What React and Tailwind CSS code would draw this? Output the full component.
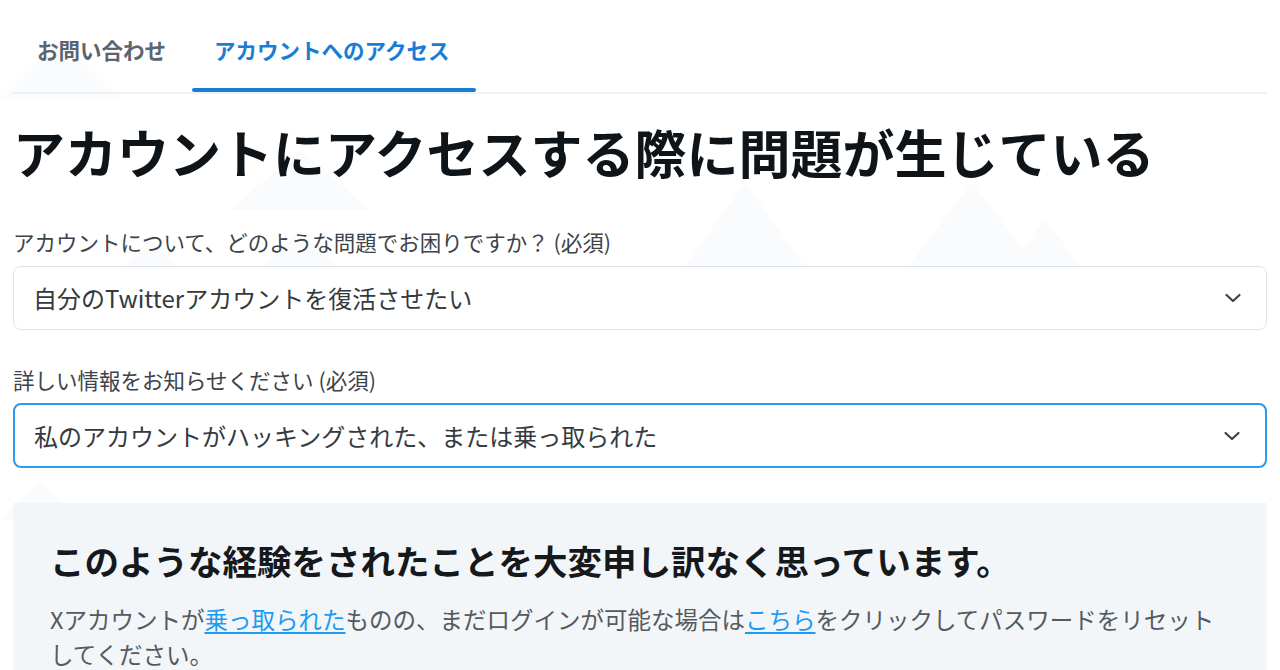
import React from "react";

const font = { fontFamily: '"Noto Sans CJK JP", "Noto Sans", sans-serif' };

const Chevron = () => (
  <svg width="18" height="12" viewBox="0 0 18 12" fill="none" className="shrink-0">
    <path d="M2.5 3 L9 9 L15.5 3" stroke="#3c4350" strokeWidth="2.2" strokeLinecap="round" strokeLinejoin="round" />
  </svg>
);

const Select = ({ value, focused }) => (
  <div
    className={`flex items-center justify-between bg-white rounded-lg pl-[19px] pr-[24px] ${
      focused ? "h-[65px] border-2 border-[#2b9bf0]" : "h-[64px] border border-[#dde3e8]"
    }`}
  >
    <span className="text-[24px] text-[#333a40] leading-none">{value}</span>
    <Chevron />
  </div>
);

// faint triangle pattern behind the form
const Backdrop = () => (
  <svg className="absolute inset-0 w-full h-full" viewBox="0 0 1280 670" preserveAspectRatio="none">
    <g fill="#fafbfc">
      <polygon points="0,100 60,40 120,100" />
      <polygon points="200,330 300,230 400,330" />
      <polygon points="60,330 150,240 240,330" />
      <polygon points="640,330 745,182 850,330" />
      <polygon points="860,330 972,182 1084,330" />
      <polygon points="960,330 1045,220 1130,330" />
      <polygon points="0,520 40,480 80,520" />
      <polygon points="230,210 300,150 370,210" />
    </g>
  </svg>
);

const Tab = ({ label, active }) => (
  <div className="flex flex-col h-[80px]">
    <div
      className={`flex-1 flex items-center text-[21.5px] font-bold ${
        active ? "pl-[22px] pr-[27px] text-[#1a7dd4]" : "px-6 text-[#5b6570]"
      }`}
    >
      {label}
    </div>
    <div className={`h-1 rounded-full ${active ? "bg-[#1a7dd4]" : ""}`} />
  </div>
);

export default function App() {
  return (
    <div className="relative w-full h-[670px] bg-white overflow-hidden" style={font}>
      <Backdrop />
      <div className="relative px-[13px] pt-[12px]">
        {/* Tabs */}
        <div className="flex gap-[2px] border-b-2 border-[#eff2f4]">
          <Tab label="お問い合わせ" />
          <Tab label="アカウントへのアクセス" active />
        </div>

        {/* Heading */}
        <h1 className="mt-[27px] text-[52px] leading-[62px] font-bold text-[#0f1419]">
          アカウントにアクセスする際に問題が生じている
        </h1>

        {/* Field 1 */}
        <div className="mt-[45px] text-[21.5px] leading-[28px] text-[#3d4349]">
          アカウントについて、どのような問題でお困りですか？ (必須)
        </div>
        <div className="mt-[10px]">
          <Select value="自分のTwitterアカウントを復活させたい" />
        </div>

        {/* Field 2 */}
        <div className="mt-[36px] text-[21.5px] leading-[28px] text-[#3d4349]">
          詳しい情報をお知らせください (必須)
        </div>
        <div className="mt-[9px]">
          <Select value="私のアカウントがハッキングされた、または乗っ取られた" focused />
        </div>

        {/* Info box */}
        <div className="mt-[35px] bg-[#f3f6f9] pl-[37px] pr-[36px] pt-[34px] pb-8">
          <h2 className="text-[34.5px] leading-[46px] font-bold text-[#16191c]">
            このような経験をされたことを大変申し訳なく思っています。
          </h2>
          <p className="mt-[19px] text-[23.5px] leading-[35px] text-[#555a60]">
            Xアカウントが<span className="text-[#1d9bf0] underline underline-offset-[3px]">乗っ取られた</span>ものの、まだログインが可能な場合は<span className="text-[#1d9bf0] underline underline-offset-[3px]">こちら</span>をクリックしてパスワードをリセットしてください。
          </p>
        </div>
      </div>
    </div>
  );
}
